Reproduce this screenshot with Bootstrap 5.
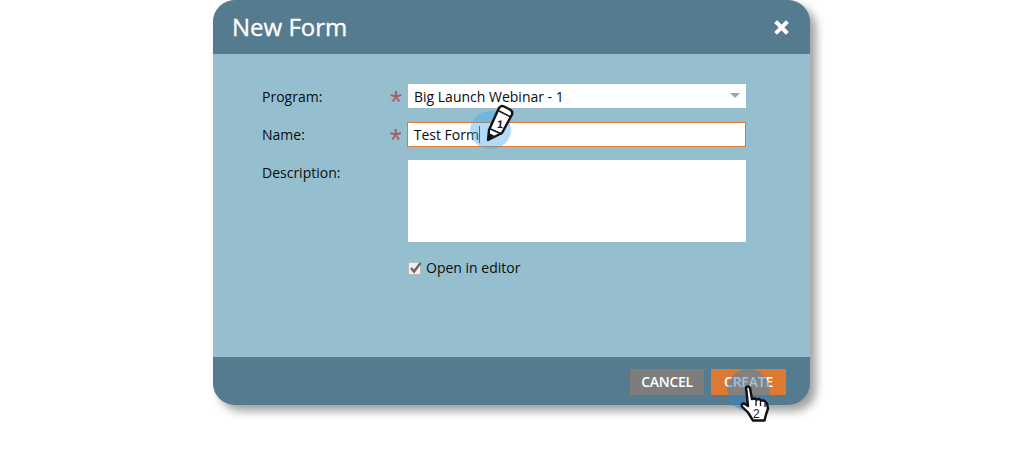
<!DOCTYPE html>
<html lang="en">
<head>
  <meta charset="UTF-8" />
  <link rel="stylesheet" href="https://cdn.jsdelivr.net/npm/bootstrap@5.3.3/dist/css/bootstrap.min.css">
  <title>New Form</title>
  <style>
    html, body { height: 449px; overflow: hidden; background: #fff; }
    body { font-family: "Open Sans", "Liberation Sans", sans-serif; color: #0c0c0c; }
    .form-dialog {
      position: relative;
      width: 597px;
      height: 405px;
      margin-left: 213px;
      background: #95bfcf;
      border: 0;
      border-radius: 22px;
      box-shadow: 6px 6px 10px rgba(0,0,0,.38);
    }
    .form-head {
      height: 54px;
      padding: 0 21px 0 19px;
      background: #557b8e;
      border: 0;
      border-radius: 22px 22px 0 0 !important;
      color: #fff;
    }
    .form-head h1 { margin: 0; font-size: 24px; font-weight: 400; line-height: 54px; -webkit-text-stroke: .35px #fff; }
    .form-body { padding: 30px 64px 0 49px; }
    .form-line { display: flex; margin-bottom: 13px; }
    .form-line label { width: 126px; font-size: 14px; line-height: 25px; }
    .req { width: 20px; color: #a85c5f; font-size: 31px; line-height: 38px; height: 24px; font-family: "Liberation Sans", sans-serif; padding-left: 2px; }
    .field { width: 338px; height: 24px; background: #fff; font-size: 14px; line-height: 25px; padding-left: 6px; position: relative; }
    .form-dialog .field-name { height: 25px; margin-left: -1px; outline: 1px solid #dd7a33; outline-offset: -1px; line-height: 25px; width: 340px; padding-left: 7px; }
    .field-desc { height: 82px; }
    .caret-down { position: absolute; right: 6px; top: 9px; width: 0; height: 0; border-left: 5px solid transparent; border-right: 5px solid transparent; border-top: 5px solid #a3a3a3; }
    .type-caret { display: inline-block; width: 1px; height: 17px; background: #1b3f6e; vertical-align: -3px; }
    .check-line { margin: 16px 0 0 146px; display: flex; align-items: center; font-size: 14px; line-height: 20px; gap: 5px; }
    .check-box { width: 13px; height: 13px; background: #f0f0f0; border: 1px solid #bbb; border-radius: 2px; position: relative; }
    .check-box svg { position: absolute; left: -1px; top: -3px; }
    .form-foot {
      position: absolute; left: 0; right: 0; bottom: 0;
      height: 48px;
      padding: 12px 24px 0 0;
      background: #557b8e;
      border: 0;
      border-radius: 0 0 22px 22px !important;
    }
    .foot-gap { gap: 7px; }
    .foot-btn { width: 74px; height: 26px; padding: 0; border: 0; border-radius: 0; color: #fff; font-size: 14px; font-weight: 600; line-height: 26px; letter-spacing: -.3px; }
    .btn-cancel { background: #7d7d7d; }
    .btn-create { background: #dc7a33; width: 75px; }
    .btn-create:hover, .btn-cancel:hover { color: #fff; }
    .click-dot { position: absolute; border-radius: 50%; }
    .dot-one { left: 257px; top: 111px; width: 41px; height: 38px; background: rgba(70,170,240,.42); }
    .dot-two { left: 514px; top: 369px; width: 43px; height: 42px; background: rgba(50,135,200,.5); }
    .pointer { position: absolute; }
    .pointer text { font: bold 11px "Liberation Sans", sans-serif; fill: #111; }
  </style>
</head>
<body>
  <div class="card form-dialog">
    <div class="card-header form-head d-flex justify-content-between align-items-center">
      <h1>New Form</h1>
      <svg class="close-x" width="15" height="15" viewBox="0 0 15 15"><path d="M3 3l9 9M12 3l-9 9" stroke="#fff" stroke-width="4" stroke-linecap="square"/></svg>
    </div>
    <div class="form-body">
      <div class="form-line">
        <label>Program:</label><span class="req">*</span>
        <div class="field">Big Launch Webinar - 1<span class="caret-down"></span></div>
      </div>
      <div class="form-line">
        <label>Name:</label><span class="req">*</span>
        <div class="field field-name">Test Form<span class="type-caret"></span></div>
      </div>
      <div class="form-line mb-0">
        <label>Description:</label><span class="req"></span>
        <div class="field field-desc"></div>
      </div>
      <div class="check-line">
        <span class="check-box"><svg width="15" height="15" viewBox="0 0 15 15"><path d="M3 8l3 3.500L12.500 3" fill="none" stroke="#666" stroke-width="2.400"/></svg></span>
        <span>Open in editor</span>
      </div>
    </div>
    <div class="card-footer form-foot d-flex justify-content-end foot-gap">
      <button class="btn foot-btn btn-cancel">CANCEL</button>
      <button class="btn foot-btn btn-create">CREATE</button>
    </div>
    <span class="click-dot dot-one"></span>
    <span class="click-dot dot-two"></span>
    <svg class="pointer" style="left:272px;top:103px" width="30" height="42" viewBox="0 0 30 42">
      <path d="M3 37l1-10L14 5q2-3 5-1.500l6 3q3 2 2 5L17 30z" fill="#fff" stroke="#111" stroke-width="2.400" stroke-linejoin="round"/>
      <path d="M14 8l11 5.500" stroke="#111" stroke-width="1.500"/>
      <path d="M5.500 26l11 5" stroke="#111" stroke-width="1.500"/>
      <path d="M3 37l1-7 5 2.500z" fill="#111"/>
      <text x="12" y="25" transform="rotate(5 15 21)">1</text>
    </svg>
    <svg class="pointer" style="left:526px;top:385px" width="36" height="40" viewBox="0 0 36 40">
      <path d="M7 2q2.500-1.500 4 1l2 11 3-.5 1.500 1 3-.5 1.500 1.500 3 0 3 3 1 5-2 6-1.500 6H14l-5-8-6-6q-1-3 2-3l4 2.500z" fill="#fff" stroke="#111" stroke-width="2.400" stroke-linejoin="round"/>
      <path d="M17 15v6M21.500 16v5M26 18v4" stroke="#111" stroke-width="1.300" fill="none"/>
      <text x="14" y="33" style="font-weight:400;font-size:12px">2</text>
    </svg>
  </div>
  <script src="https://cdn.jsdelivr.net/npm/bootstrap@5.3.3/dist/js/bootstrap.bundle.min.js"></script>
</body>
</html>
